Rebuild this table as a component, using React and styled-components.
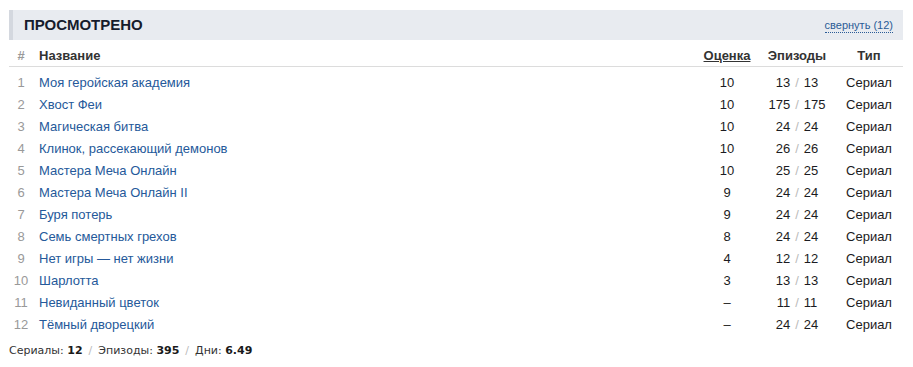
import React from "react";
import styled, { createGlobalStyle } from "styled-components";

const GlobalStyle = createGlobalStyle`
  body {
    margin: 0;
    background: #fff;
    font-family: "Liberation Sans", Arial, sans-serif;
    font-size: 13px;
    color: #222;
  }
`;

const items = [
  { title: "Моя геройская академия", score: "10", ep: "13", total: "13" },
  { title: "Хвост Феи", score: "10", ep: "175", total: "175" },
  { title: "Магическая битва", score: "10", ep: "24", total: "24" },
  { title: "Клинок, рассекающий демонов", score: "10", ep: "26", total: "26" },
  { title: "Мастера Меча Онлайн", score: "10", ep: "25", total: "25" },
  { title: "Мастера Меча Онлайн II", score: "9", ep: "24", total: "24" },
  { title: "Буря потерь", score: "9", ep: "24", total: "24" },
  { title: "Семь смертных грехов", score: "8", ep: "24", total: "24" },
  { title: "Нет игры — нет жизни", score: "4", ep: "12", total: "12" },
  { title: "Шарлотта", score: "3", ep: "13", total: "13" },
  { title: "Невиданный цветок", score: "–", ep: "11", total: "11" },
  { title: "Тёмный дворецкий", score: "–", ep: "24", total: "24" },
];

export default function App() {
  return (
    <>
      <GlobalStyle />
      <Wrapper>
        <SectionBar>
          <SectionTitle>Просмотрено</SectionTitle>
          <Toggle href="#">свернуть (12)</Toggle>
        </SectionBar>
        <Table>
          <colgroup>
            <col style={{ width: 24 }} />
            <col />
            <col style={{ width: 64 }} />
            <col style={{ width: 76 }} />
            <col style={{ width: 68 }} />
          </colgroup>
          <thead>
            <tr>
              <Th $muted>#</Th>
              <Th $align="left">Название</Th>
              <Th $sorted>Оценка</Th>
              <Th>Эпизоды</Th>
              <Th>Тип</Th>
            </tr>
          </thead>
          <tbody>
            {items.map((item, i) => (
              <Row key={item.title} $first={i === 0}>
                <Num>{i + 1}</Num>
                <Name>
                  <TitleLink href="#">{item.title}</TitleLink>
                </Name>
                <Cell>{item.score}</Cell>
                <Cell>
                  {item.ep}
                  <Slash>/</Slash>
                  {item.total}
                </Cell>
                <Cell>Сериал</Cell>
              </Row>
            ))}
          </tbody>
        </Table>
        <Totals>
          Сериалы: <b>12</b>
          <Slash $wide>/</Slash>
          Эпизоды: <b>395</b>
          <Slash $wide>/</Slash>
          Дни: <b>6.49</b>
        </Totals>
      </Wrapper>
    </>
  );
}

const Wrapper = styled.div`
  width: 894px;
  padding: 10px 0 0 9px;
`;

const SectionBar = styled.div`
  height: 30px;
  display: flex;
  align-items: center;
  justify-content: space-between;
  background: #e8ebf0;
  border-left: 4px solid #d4d8df;
  padding: 0 10px 0 11px;
`;

const SectionTitle = styled.h2`
  margin: 0;
  font-size: 15px;
  font-weight: bold;
  text-transform: uppercase;
  color: #161c2c;
  line-height: 30px;
`;

const Toggle = styled.a`
  align-self: flex-end;
  margin-bottom: 7px;
  font-size: 11px;
  line-height: 13px;
  color: #2a5b96;
  text-decoration: none;
  border-bottom: 1px dotted #2a5b96;
`;

const Table = styled.table`
  width: 100%;
  table-layout: fixed;
  border-collapse: collapse;
`;

const Th = styled.th`
  padding: 8px ${(p) => (p.$align === "left" ? "0 3px 6px" : "0 3px 0")};
  text-align: ${(p) => p.$align || "center"};
  font-weight: bold;
  font-size: 13px;
  line-height: 15px;
  color: ${(p) => (p.$muted ? "#999" : "#333")};
  text-decoration: ${(p) => (p.$sorted ? "underline" : "none")};
  border-bottom: 1px solid #dcdcdc;
`;

const Row = styled.tr`
  td {
    padding-top: ${(p) => (p.$first ? "6px" : "3px")};
  }
`;

const Cell = styled.td`
  height: 19px;
  padding: 3px 0 0;
  text-align: center;
  line-height: 15px;
  color: #1b1b22;
  white-space: nowrap;
`;

const Num = styled(Cell)`
  color: #999;
`;

const Name = styled(Cell)`
  text-align: left;
  padding-left: 6px;
`;

const TitleLink = styled.a`
  color: #25599a;
  text-decoration: none;
`;

const Slash = styled.span`
  color: #bbb;
  margin: 0 ${(p) => (p.$wide ? "6px" : "5px")};
`;

const Totals = styled.div`
  margin-top: 7px;
  font-family: "DejaVu Sans", Verdana, sans-serif;
  font-size: 11px;
  line-height: 20px;
  color: #333;

  b {
    color: #1a1a1a;
  }
`;
